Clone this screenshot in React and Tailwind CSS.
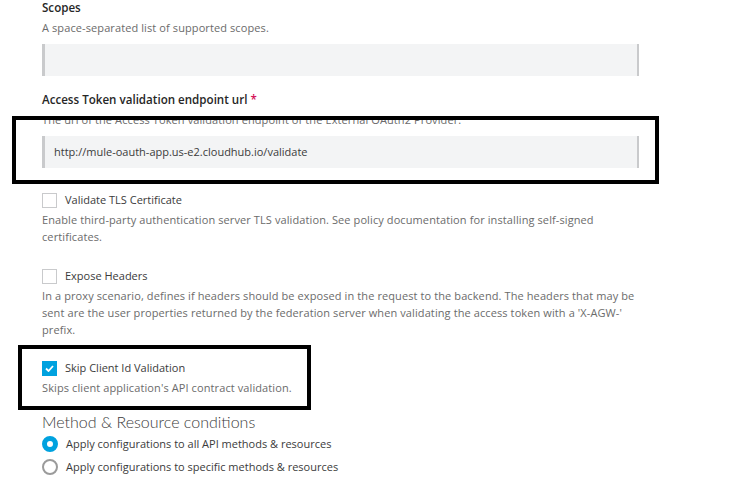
import { useState } from 'react';

const Field = ({ label, required, hint, value }) => (
  <div>
    <div className="text-[11.6px] font-semibold text-[#262626] leading-[16px]">
      {label}
      {required && <span className="text-[#d4145a]"> *</span>}
    </div>
    <div className="mt-[4px] text-[11px] text-[#6b6b6b] leading-[16px] tracking-[0.1px]">{hint}</div>
    <div className="mt-[8px] h-[32px] w-[597px] bg-[#f3f4f5] border-l-[3px] border-r-[2px] border-[#c9cacc] flex items-center pl-[9px] text-[11px] text-[#3b3b3b]">
      {value}
    </div>
  </div>
);

const Check = ({ checked, label, hint }) => (
  <div>
    <label className="flex items-center gap-[8px] h-[16px]">
      {checked ? (
        <span className="w-[15px] h-[15px] bg-[#00a2df] flex items-center justify-center">
          <svg width="9" height="7" viewBox="0 0 9 7">
            <path d="M1 3.5 L3.5 6 L8 1" fill="none" stroke="white" strokeWidth="1.8" />
          </svg>
        </span>
      ) : (
        <span className="w-[15px] h-[15px] border border-[#c9cacc] bg-white" />
      )}
      <span className="text-[11px] text-[#3b3b3b]">{label}</span>
    </label>
    <div className="mt-[3px] text-[11px] text-[#6b6b6b] leading-[17px] tracking-[0.1px] w-[600px]">{hint}</div>
  </div>
);

const Radio = ({ checked, label }) => (
  <label className="flex items-center gap-[8px] h-[16px]">
    {checked ? (
      <span className="w-[16px] h-[16px] rounded-full border-[5px] border-[#00a2df] bg-white" />
    ) : (
      <span className="w-[16px] h-[16px] rounded-full border-[2px] border-[#9b9b9b] bg-white" />
    )}
    <span className="text-[11px] text-[#3b3b3b]">{label}</span>
  </label>
);

export default function App() {
  const [mode] = useState('all');

  return (
    <div
      className="relative w-[736px] h-[487px] bg-white overflow-hidden"
      style={{ fontFamily: '"Open Sans", "Liberation Sans", sans-serif' }}
    >
      <div className="pl-[42px]">
        <Field label="Scopes" hint="A space-separated list of supported scopes." value="" />

        <div className="mt-[16px]">
          <Field
            label="Access Token validation endpoint url"
            required
            hint="The url of the Access Token validation endpoint of the External OAuth2 Provider."
            value="http://mule-oauth-app.us-e2.cloudhub.io/validate"
          />
        </div>

        <div className="mt-[24px]">
          <Check
            label="Validate TLS Certificate"
            hint="Enable third-party authentication server TLS validation. See policy documentation for installing self-signed certificates."
          />
        </div>

        <div className="mt-[23px]">
          <Check
            label="Expose Headers"
            hint="In a proxy scenario, defines if headers should be exposed in the request to the backend. The headers that may be sent are the user properties returned by the federation server when validating the access token with a 'X-AGW-' prefix."
          />
        </div>

        <div className="mt-[22px]">
          <Check checked label="Skip Client Id Validation" hint="Skips client application's API contract validation." />
        </div>

        <div
          className="mt-[16px] text-[16px] font-light text-[#3b3b3b] leading-[20px]"
          style={{ fontFamily: 'Lato, "Open Sans", sans-serif' }}
        >
          Method &amp; Resource conditions
        </div>
        <div className="mt-[4px] flex flex-col gap-[7px]">
          <Radio checked={mode === 'all'} label="Apply configurations to all API methods & resources" />
          <Radio checked={mode === 'specific'} label="Apply configurations to specific methods & resources" />
        </div>
      </div>

      {/* annotation outlines drawn over the form */}
      <div className="absolute left-[12px] top-[116px] w-[647px] h-[68px] border-[4px] border-black" />
      <div className="absolute left-[18px] top-[345px] w-[293px] h-[65px] border-[4px] border-black" />
    </div>
  );
}
